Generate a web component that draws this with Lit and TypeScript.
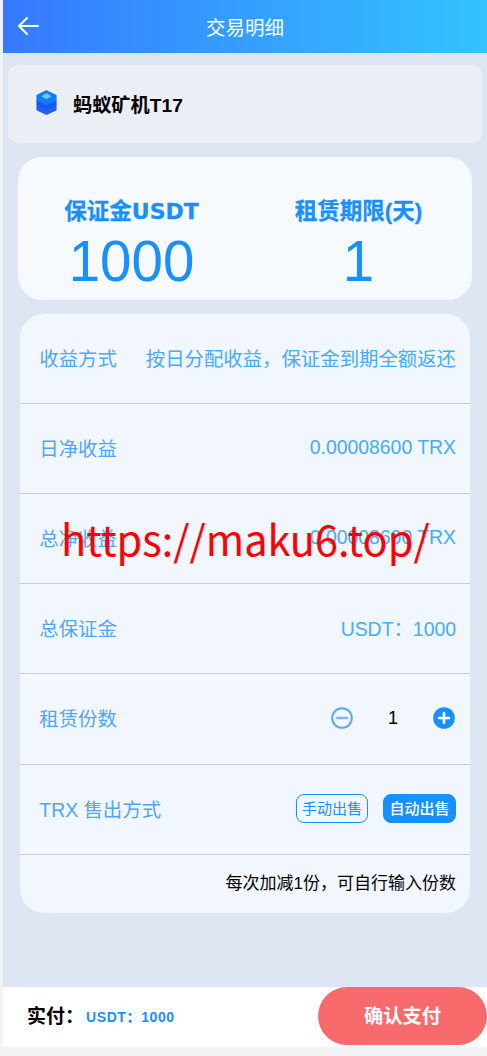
import { LitElement, html, css } from "lit";
import { customElement } from "lit/decorators.js";

const rows: [string, string][] = [
  ["收益方式", "按日分配收益，保证金到期全额返还"],
  ["日净收益", "0.00008600 TRX"],
  ["总净收益", "0.00008600 TRX"],
  ["总保证金", "USDT：1000"],
];

@customElement("app-root")
export class AppRoot extends LitElement {
  static styles = css`
    :host {
      display: block;
      position: relative;
      height: 1056px;
      overflow: hidden;
      background: #f1f3f5;
      font-family: "Liberation Sans", "Noto Sans CJK SC", sans-serif;
    }
    .page {
      margin-left: 3px;
      height: 1047px;
      background: #dfe6f3;
      display: flex;
      flex-direction: column;
    }
    .head {
      height: 53px;
      flex: none;
      background: linear-gradient(90deg, #3679ff, #34c3ff);
      display: flex;
      align-items: center;
      justify-content: center;
      position: relative;
      color: #fff;
      font-size: 19.5px;
      padding-bottom: 1px;
      box-sizing: border-box;
    }
    .back {
      position: absolute;
      left: 14px;
      top: 15px;
      width: 22px;
      height: 22px;
    }
    .miner {
      margin: 12px 5px 0;
      height: 78px;
      flex: none;
      box-sizing: border-box;
      border-radius: 10px;
      background: #ebeef4;
      display: flex;
      align-items: center;
      padding: 0 0 0 28px;
      gap: 16px;
      font-size: 19.2px;
      font-weight: 700;
      color: #000;
    }
    .miner svg { width: 21px; height: 25px; margin-top: -3px; flex: none; }
    .summary {
      margin: 14px 15px 0;
      height: 143px;
      flex: none;
      box-sizing: border-box;
      border-radius: 24px;
      background: #f6faff;
      display: grid;
      grid-template-columns: 1fr 1fr;
      padding: 41px 0 0 0;
      color: #1890ff;
      text-align: center;
    }
    .sum-label {
      font-size: 22.5px;
      font-weight: 700;
      line-height: 28px;
      white-space: nowrap;
      -webkit-text-stroke: 0.3px #1890ff;
    }
    .sum-label .wide { font-family: "DejaVu Sans", sans-serif; font-weight: 700; font-size: 22px; }
    .sum-value { font-size: 56.5px; line-height: 64px; margin-top: 4px; }
    .detail {
      margin: 14px 17px 0;
      height: 599px;
      flex: none;
      box-sizing: border-box;
      border-radius: 24px;
      background: #f1f6ff;
      font-size: 19.4px;
    }
    .row {
      height: 90px;
      box-sizing: border-box;
      border-bottom: 1px solid #c9ccd6;
      display: flex;
      align-items: center;
      justify-content: space-between;
      padding: 0 14px 3px 20px;
      white-space: nowrap;
    }
    .row.tall { height: 90.5px; padding-bottom: 2px; border-bottom-color: #cccdd2; }
    .row .k { color: #4fa6fd; margin-left: -0.7px; }
    .row .v { color: #45acff; }
    .stepper { display: flex; align-items: center; font-size: 18px; color: #000; margin-right: 1px; }
    .stepper svg { width: 22px; height: 22px; display: block; }
    .stepper span { width: 80px; text-align: center; line-height: 22px; }
    .btns { display: flex; gap: 15px; }
    .btn {
      box-sizing: border-box;
      height: 29px;
      border-radius: 8px;
      font-size: 15px;
      line-height: 27px;
      padding: 0 5px;
      border: 1px solid #1890ff;
      color: #1890ff;
    }
    .btn.on { background: #1890ff; color: #fff; font-weight: 500; padding: 0 5.5px; }
    .note {
      text-align: right;
      padding: 19px 14px 0 0;
      font-size: 17px;
      line-height: 20px;
      color: #000;
    }
    .spacer { flex: 1; }
    .foot {
      height: 60px;
      flex: none;
      background: #fff;
      display: flex;
      align-items: flex-start;
      position: relative;
    }
    .pay {
      margin: 18px 0 0 24px;
      font-size: 19px;
      line-height: 24px;
      font-weight: 700;
      color: #000;
      display: flex;
      align-items: center;
      gap: 2px;
    }
    .pay b { font-size: 14px; color: #1890ff; letter-spacing: 0.6px; }
    .confirm {
      position: absolute;
      right: 0;
      top: 0;
      width: 169px;
      height: 58px;
      border-radius: 29px;
      background: #f96a6c;
      color: #fff;
      font-size: 19.3px;
      font-weight: 700;
      display: flex;
      align-items: center;
      justify-content: center;
      padding-bottom: 2px;
      box-sizing: border-box;
    }
    .watermark {
      position: absolute;
      left: 61px;
      top: 506px;
      font-family: "Noto Sans CJK SC", sans-serif;
      font-size: 41.5px;
      line-height: 64px;
      color: #ff0000;
      white-space: nowrap;
    }
  `;

  render() {
    return html`
      <div class="page">
        <div class="head">
          <svg class="back" viewBox="0 0 22 22" fill="none" stroke="#fff" stroke-width="2" stroke-linecap="round" stroke-linejoin="round">
            <path d="M2 11H21M10 3L2 11L10 19" />
          </svg>
          交易明细
        </div>
        <div class="miner">
          <svg viewBox="0 0 21 26">
            <path d="M10.5 10L20 14.5Q21 15 21 16V20.5Q21 21 20 21.5L11 25.7Q10.5 26 10 25.7L1 21.5Q0 21 0 20.5V16Q0 15 1 14.5Z" fill="#2560f5" />
            <path d="M10.5 5L20 9.5Q21 10 21 11V15Q21 16 20 16.5L11 20.7Q10.5 21 10 20.7L1 16.5Q0 16 0 15V11Q0 10 1 9.5Z" fill="#1a57f2" />
            <path d="M10.5 0.3L20 4.6Q21 5 21 6V10Q21 11 20 11.5L11 15.6Q10.5 15.9 10 15.6L1 11.5Q0 11 0 10V6Q0 5 1 4.6L10 0.3Z" fill="#0d7dfb" />
            <path d="M10.5 3.5L16 6.5L10.5 9.5L5 6.5Z" fill="#6cc5fb" />
          </svg>
          蚂蚁矿机T17
        </div>
        <div class="summary">
          <div>
            <div class="sum-label">保证金<span class="wide">USDT</span></div>
            <div class="sum-value">1000</div>
          </div>
          <div>
            <div class="sum-label">租赁期限(天)</div>
            <div class="sum-value">1</div>
          </div>
        </div>
        <div class="detail">
          ${rows.map(
            ([k, v]) => html`<div class="row"><span class="k">${k}</span><span class="v">${v}</span></div>`
          )}
          <div class="row tall">
            <span class="k">租赁份数</span>
            <div class="stepper">
              <svg viewBox="0 0 22 22" fill="none">
                <circle cx="11" cy="11" r="9.8" stroke="#58a8fb" stroke-width="2" />
                <path d="M6 11H16" stroke="#7db9f8" stroke-width="2.6" stroke-linecap="round" />
              </svg>
              <span>1</span>
              <svg viewBox="0 0 22 22" fill="none">
                <circle cx="11" cy="11" r="10.8" fill="#1890ff" />
                <path d="M6 11H16M11 6V16" stroke="#fff" stroke-width="2.6" stroke-linecap="round" />
              </svg>
            </div>
          </div>
          <div class="row tall">
            <span class="k">TRX 售出方式</span>
            <div class="btns">
              <div class="btn">手动出售</div>
              <div class="btn on">自动出售</div>
            </div>
          </div>
          <div class="note">每次加减1份，可自行输入份数</div>
        </div>
        <div class="spacer"></div>
        <div class="foot">
          <div class="pay">实付：<b>USDT：1000</b></div>
          <div class="confirm">确认支付</div>
        </div>
      </div>
      <div class="watermark">https://maku6.top/</div>
    `;
  }
}
